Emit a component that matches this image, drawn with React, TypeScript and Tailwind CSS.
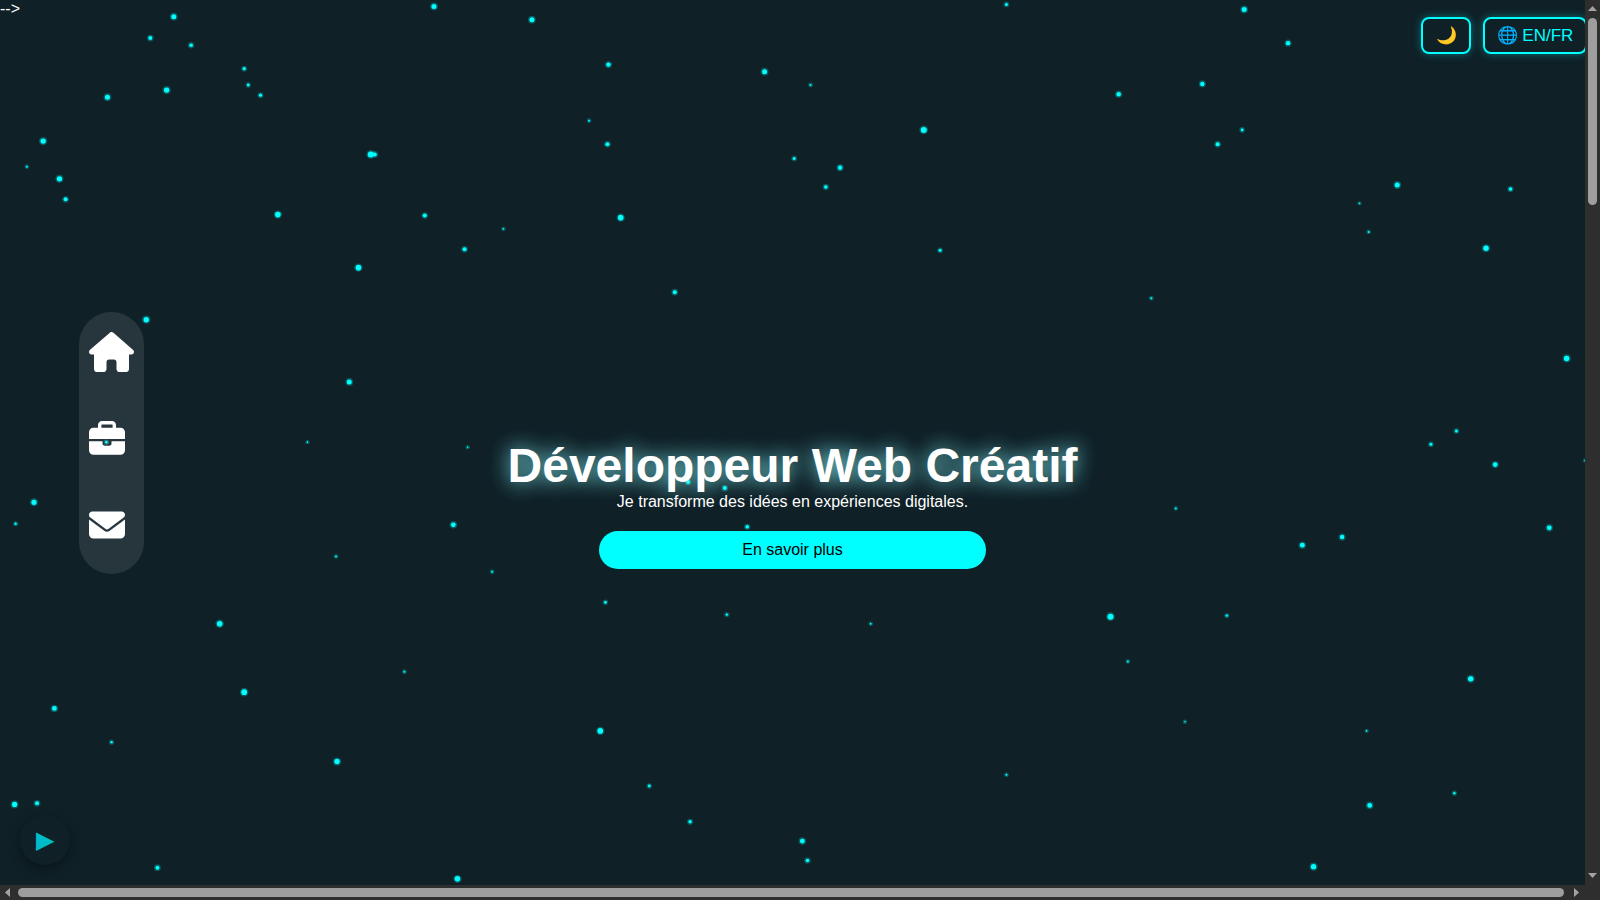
import { FaBriefcase, FaEnvelope, FaHouse } from 'react-icons/fa6';

// particle positions as read off the shrunk 1568px reference: [x, y, radius]
const PARTICLES: [number, number, number][] = [
  [170, 16, 2.5], [147, 37, 2], [187, 44, 1.8], [425, 6, 2.5], [521, 19, 2.5], [986, 4, 1.5], [1219, 9, 2.5], [1262, 42, 2.2],
  [239, 67, 1.6], [243, 83, 1.4], [255, 93, 1.6], [105, 95, 2.5], [163, 88, 2.7], [596, 63, 2.2], [749, 70, 2.5], [794, 83, 1],
  [1096, 92, 2.2], [1178, 82, 2.2], [42, 138, 2.7], [26, 163, 1], [58, 175, 2.7], [64, 195, 2], [363, 151, 3], [367, 151, 2],
  [577, 118, 1], [595, 141, 2], [778, 155, 1.5], [823, 164, 2.2], [905, 127, 3], [809, 183, 1.8], [1193, 141, 2], [1217, 127, 1.4],
  [1369, 181, 2.5], [1480, 185, 1.8], [1332, 199, 0.8], [1341, 227, 1], [272, 210, 2.8], [416, 211, 2], [493, 224, 0.9], [608, 213, 2.8],
  [455, 244, 2], [921, 245, 1.5], [1456, 243, 2.7], [351, 262, 2.8], [661, 286, 2], [1128, 292, 1], [143, 313, 2.7], [1535, 351, 2.7],
  [342, 374, 2.5], [301, 433, 0.8], [458, 438, 0.8], [1427, 422, 1.5], [1402, 435, 1.5], [1465, 455, 2.3], [1553, 451, 0.8], [33, 492, 2.6],
  [15, 513, 1.2], [444, 514, 2.4], [329, 545, 1], [482, 560, 1], [604, 468, 2], [674, 472, 2], [710, 478, 2], [732, 516, 1.8],
  [1152, 498, 1], [1518, 517, 2.4], [1276, 534, 2.4], [1315, 526, 2.2], [593, 590, 1.4], [712, 602, 1.2], [853, 611, 0.9], [1088, 604, 3],
  [1202, 603, 1.2], [215, 611, 2.8], [396, 658, 1], [1105, 648, 1], [1441, 665, 2.7], [239, 678, 2.9], [53, 694, 2.4], [109, 727, 1.2],
  [588, 716, 2.8], [1161, 707, 0.8], [1339, 716, 0.8], [330, 746, 2.7], [986, 759, 1], [636, 770, 1.4], [1425, 777, 1.2], [14, 788, 2.6],
  [36, 787, 2], [1342, 789, 2.4], [676, 805, 1.7], [786, 824, 2.4], [791, 843, 1.8], [154, 850, 2], [448, 861, 2.8], [1287, 849, 2.7],
  [104, 433, 1.3],
];

const SCALE = 1600 / 1568;

function Particles() {
  return (
    <svg className="absolute left-0 top-0 h-[885px] w-[1585px]" viewBox="0 0 1585 885">
      {PARTICLES.map(([x, y, r], i) => (
        <g key={i}>
          <circle cx={x * SCALE + 0.3} cy={y * SCALE + 0.3} r={r + 1.4} fill="#00ffff" opacity={0.25} />
          <circle cx={x * SCALE + 0.3} cy={y * SCALE + 0.3} r={r} fill="#00ffff" />
        </g>
      ))}
    </svg>
  );
}

function SideNav() {
  return (
    <nav className="absolute left-[79px] top-[312px] flex h-[262px] w-[65px] flex-col items-start rounded-[33px] bg-white/10 pl-[10px] text-white">
      <a className="mt-[20px] flex h-[40px] items-center">
        <FaHouse className="h-[40px] w-[45px]" />
      </a>
      <a className="mt-[49px] flex h-[36px] items-center">
        <FaBriefcase className="h-[36px] w-[36px]" />
      </a>
      <a className="mt-[50px] flex h-[36px] items-center">
        <FaEnvelope className="h-[36px] w-[36px]" />
      </a>
    </nav>
  );
}

// the page's scrollbars, drawn: headless capture doesn't paint native ones
function Arrow({ points }: { points: string }) {
  return (
    <svg className="h-[15px] w-[15px] shrink-0" viewBox="0 0 15 15">
      <polygon points={points} fill="#a3a3a3" />
    </svg>
  );
}

function VerticalScrollbar() {
  return (
    <div className="flex h-[885px] w-[15px] shrink-0 flex-col items-center bg-[#2e2e2e]">
      <Arrow points="7.5,6 3,11 12,11" />
      <div className="mt-[3px] h-[187px] w-[9px] rounded-full bg-[#9e9e9e]" />
      <div className="mt-auto">
        <Arrow points="3,3 12,3 7.5,8" />
      </div>
    </div>
  );
}

function HorizontalScrollbar() {
  return (
    <div className="flex h-[15px] w-[1600px] shrink-0 items-center bg-[#2e2e2e]">
      <Arrow points="5,7.5 10,3 10,12" />
      <div className="ml-[3px] h-[9px] w-[1546px] rounded-full bg-[#9e9e9e]" />
      <div className="ml-[6px]">
        <Arrow points="4,3 9,7.5 4,12" />
      </div>
    </div>
  );
}

export default function App() {
  return (
    <div className="flex h-screen w-screen flex-col overflow-hidden bg-[#0f2027] font-['Liberation_Sans',Arial,sans-serif]">
      <div className="flex h-[885px] shrink-0">
        <div className="relative h-[885px] w-[1585px] shrink-0 overflow-hidden">
          <Particles />

          <div className="absolute left-0 top-0 text-base leading-[18px] text-white">--&gt;</div>

          <div className="absolute -right-[2px] top-[17px] flex gap-[12px] text-[17px] text-[#00ffff]">
            <button className="flex h-[37px] w-[50px] items-center justify-center rounded-lg border-2 border-[#00ffff] shadow-[0_0_8px_rgba(0,255,255,0.35)]">
              🌙
            </button>
            <button className="flex h-[37px] w-[104px] items-center justify-center rounded-lg border-2 border-[#00ffff] shadow-[0_0_8px_rgba(0,255,255,0.35)]">
              🌐 EN/FR
            </button>
          </div>

          <SideNav />

          <main className="relative flex h-[885px] flex-col items-center pt-[438px] text-white">
            <h1 className="text-5xl leading-[55px] font-bold [text-shadow:0_0_20px_rgba(130,240,245,1)]">
              Développeur Web Créatif
            </h1>
            <p className="text-base leading-[18px]">Je transforme des idées en expériences digitales.</p>
            <button className="mt-[20px] h-[38px] w-[387px] rounded-[19px] bg-[#00ffff] text-base text-black">
              En savoir plus
            </button>
          </main>

          <button className="absolute left-[20px] top-[815px] flex h-[50px] w-[50px] items-center justify-center rounded-full bg-[#0f2027] text-2xl text-[#00bcc8] shadow-[0_4px_12px_rgba(0,0,0,0.35)]">
            ▶
          </button>
        </div>
        <VerticalScrollbar />
      </div>
      <HorizontalScrollbar />
    </div>
  );
}
